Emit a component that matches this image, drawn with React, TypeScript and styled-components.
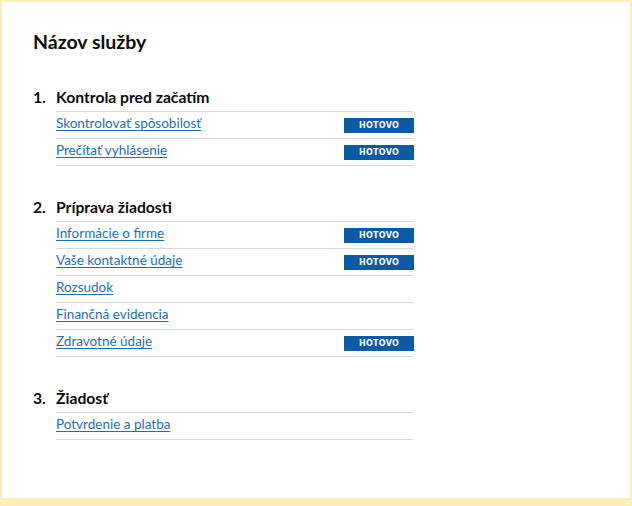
import React from "react";
import styled, { createGlobalStyle } from "styled-components";

const Global = createGlobalStyle`
  html, body { margin: 0; padding: 0; }
  body {
    background: #fdefb9;
    font-family: Lato, "Noto Sans", sans-serif;
    color: #0b0c0c;
  }
`;

const Frame = styled.div`
  box-sizing: border-box;
  margin: 2px 2px 8px 2px;
  height: 496px;
  background: #ffffff;
  padding: 28px 31px 0 31px;
`;

const Title = styled.h1`
  margin: 0 0 33px 0;
  font-size: 19.5px;
  line-height: 24px;
  font-weight: 700;
`;

const Section = styled.section`
  margin-bottom: 31px;
  width: 380px;
`;

const Heading = styled.h2`
  display: flex;
  margin: 0 0 4px 0;
  font-size: 15.7px;
  line-height: 20px;
  font-weight: 700;
`;

const Num = styled.span`
  width: 23px;
  flex: none;
`;

const List = styled.ul`
  list-style: none;
  margin: 0 0 0 23px;
  padding: 0;
  border-top: 1px solid #d8d8d8;
`;

const Row = styled.li`
  display: flex;
  align-items: center;
  justify-content: space-between;
  height: 26px;
  border-bottom: 1px solid #d8d8d8;
`;

const Link = styled.a`
  display: inline-block;
  padding-bottom: 3px;
  color: #1d70b8;
  font-size: 13.5px;
  line-height: 17px;
  text-decoration: underline;
  text-underline-offset: 2px;
  text-decoration-thickness: 1px;
`;

const Tag = styled.span`
  display: inline-flex;
  align-items: center;
  justify-content: center;
  width: 70px;
  height: 15px;
  margin-right: -1px;
  background: #0b5aa6;
  color: #fff;
  font-family: "DejaVu Sans", sans-serif;
  font-size: 8px;
  font-weight: 700;
  letter-spacing: 0.3px;
`;

type Item = { label: string; done?: boolean };
const sections: { title: string; items: Item[] }[] = [
  {
    title: "Kontrola pred začatím",
    items: [
      { label: "Skontrolovať spôsobilosť", done: true },
      { label: "Prečítať vyhlásenie", done: true },
    ],
  },
  {
    title: "Príprava žiadosti",
    items: [
      { label: "Informácie o firme", done: true },
      { label: "Vaše kontaktné údaje", done: true },
      { label: "Rozsudok" },
      { label: "Finančná evidencia" },
      { label: "Zdravotné údaje", done: true },
    ],
  },
  {
    title: "Žiadosť",
    items: [{ label: "Potvrdenie a platba" }],
  },
];

export default function App() {
  return (
    <>
      <Global />
      <Frame>
        <Title>Názov služby</Title>
        {sections.map((s, i) => (
          <Section key={s.title}>
            <Heading>
              <Num>{i + 1}.</Num>
              {s.title}
            </Heading>
            <List>
              {s.items.map((it) => (
                <Row key={it.label}>
                  <Link href="#">{it.label}</Link>
                  {it.done && <Tag>HOTOVO</Tag>}
                </Row>
              ))}
            </List>
          </Section>
        ))}
      </Frame>
    </>
  );
}
